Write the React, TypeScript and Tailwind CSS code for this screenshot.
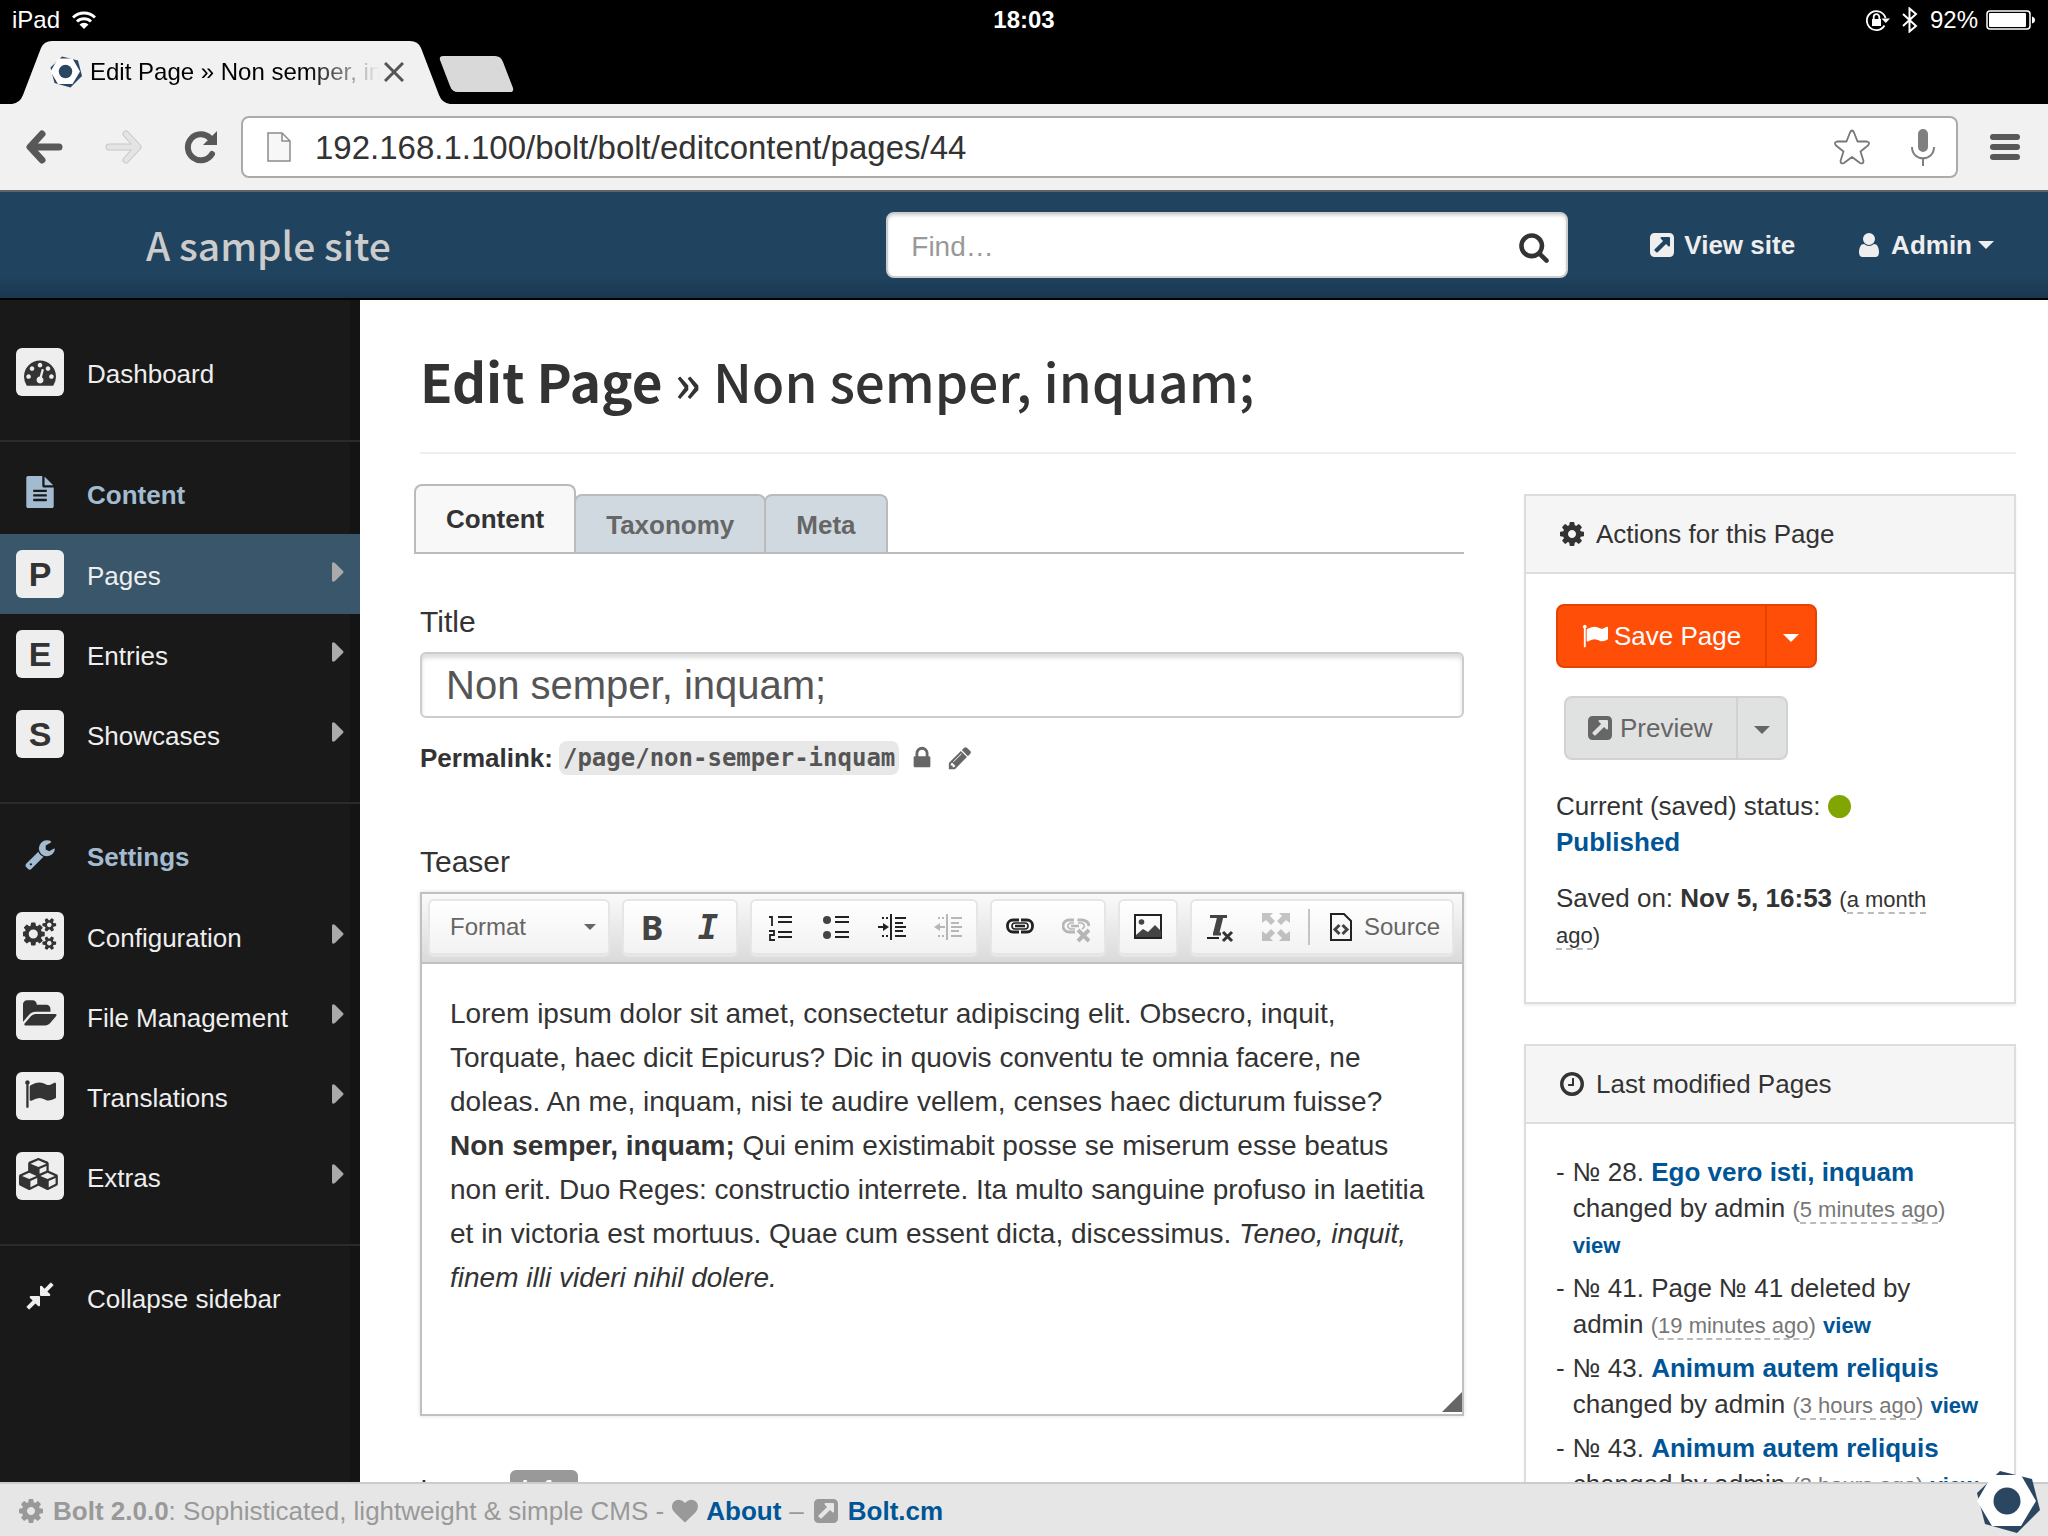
import type { ReactNode } from "react";

const PATHS = {
  flag: "M320 256q0 72-64 110v1266q0 13-9.5 22.500t-22.500 9.500h-64q-13 0-22.500-9.500t-9.500-22.500v-1266q-64-38-64-110 0-53 37.500-90.500t90.500-37.500 90.500 37.500 37.500 90.500zm1472 64v763q0 25-12.500 38.500t-39.500 27.500q-215 116-369 116-61 0-123.500-22t-108.500-48-115.500-48-142.500-22q-192 0-464 146-17 9-33 9-26 0-45-19t-19-45v-742q0-32 31-55 21-14 79-43 236-120 421-120 107 0 200 29t219 88q38 19 88 19 54 0 117.500-21t110-47 88-47 54.500-21q26 0 45 19t19 45z",
  cog: "M1152 896q0-106-75-181t-181-75-181 75-75 181 75 181 181 75 181-75 75-181zm512-109v222q0 12-8 23t-20 13l-185 28q-19 54-39 91 35 50 107 138 10 12 10 25t-9 23q-27 37-99 108t-94 71q-12 0-26-9l-138-108q-44 23-91 38-16 136-29 186-7 28-36 28h-222q-14 0-24.500-8.500t-11.500-21.500l-28-184q-49-16-90-37l-141 107q-10 9-25 9-14 0-25-11-126-114-165-168-7-10-7-23 0-12 8-23 15-21 51-66.500t54-70.500q-27-50-41-99l-183-27q-13-2-21-12.500t-8-23.500v-222q0-12 8-23t19-13l186-28q14-46 39-92-40-57-107-138-10-12-10-24 0-10 9-23 26-36 98.500-107.500t94.500-71.500q13 0 26 10l138 107q44-23 91-38 16-136 29-186 7-28 36-28h222q14 0 24.500 8.500t11.500 21.500l28 184q49 16 90 37l142-107q9-9 24-9 13 0 25 10 129 119 165 170 7 8 7 22 0 12-8 23-15 21-51 66.500t-54 70.500q26 50 41 98l183 28q13 2 21 12.500t8 23.500z",
  search: "M1216 832q0-185-131.500-316.500t-316.500-131.500-316.500 131.500-131.500 316.500 131.500 316.500 316.500 131.500 316.500-131.500 131.500-316.500zm512 832q0 52-38 90t-90 38q-54 0-90-38l-343-342q-179 124-399 124-143 0-273.500-55.500t-225-150-150-225-55.500-273.500 55.500-273.500 150-225 225-150 273.500-55.500 273.500 55.500 225 150 150 225 55.500 273.500q0 220-124 399l343 343q37 37 37 90z",
  external: "M1408 928v-480q0-26-19-45t-45-19h-480q-42 0-59 39-17 41 14 70l144 144-534 534q-19 19-19 45t19 45l102 102q19 19 45 19t45-19l534-534 144 144q18 19 45 19 12 0 25-5 39-17 39-59zm256-512v960q0 119-84.500 203.500t-203.500 84.500h-960q-119 0-203.500-84.500t-84.500-203.500v-960q0-119 84.500-203.500t203.500-84.500h960q119 0 203.500 84.500t84.500 203.500z",
  user: "M1536 1399q0 109-62.500 187t-150.500 78h-854q-88 0-150.500-78t-62.500-187q0-85 8.500-160.500t31.500-152 58.500-131 94-89 134.500-34.500q131 128 313 128t313-128q76 0 134.500 34.500t94 89 58.500 131 31.500 152 8.500 160.500zm-256-887q0 159-112.500 271.500t-271.500 112.500-271.500-112.500-112.500-271.500 112.500-271.500 271.500-112.500 271.500 112.500 112.500 271.500z",
  dashboard: "M384 1152q0-53-37.500-90.500t-90.500-37.500-90.500 37.500-37.500 90.500 37.500 90.500 90.500 37.500 90.500-37.500 37.500-90.500zm192-448q0-53-37.500-90.500t-90.500-37.500-90.500 37.500-37.500 90.500 37.500 90.500 90.500 37.500 90.500-37.500 37.500-90.500zm428 481l101-382q6-26-7.500-48.500t-38.500-29.500-48 6.500-30 39.500l-101 382q-60 5-107 43.500t-63 98.500q-20 77 20 146t117 89 146-20 89-117q16-60-6-117t-72-91zm660-33q0-53-37.500-90.500t-90.500-37.500-90.500 37.500-37.500 90.500 37.500 90.500 90.500 37.500 90.500-37.500 37.500-90.500zm-640-640q0-53-37.500-90.500t-90.500-37.500-90.500 37.500-37.500 90.500 37.500 90.500 90.500 37.500 90.500-37.500 37.500-90.500zm448 192q0-53-37.500-90.500t-90.500-37.500-90.500 37.500-37.500 90.500 37.500 90.500 90.500 37.500 90.500-37.500 37.500-90.500zm320 448q0 261-141 483-19 29-54 29h-1402q-35 0-54-29-141-221-141-483 0-182 71-348t191-286 286-191 348-71 348 71 286 191 191 286 71 348z",
  file: "M1596 476q14 14 28 36h-472v-472q22 14 36 28zm-476 164h544v1056q0 40-28 68t-68 28h-1344q-40 0-68-28t-28-68v-1600q0-40 28-68t68-28h800v544q0 40 28 68t68 28zm160 736v-64q0-14-9-23t-23-9h-704q-14 0-23 9t-9 23v64q0 14 9 23t23 9h704q14 0 23-9t9-23zm0-256v-64q0-14-9-23t-23-9h-704q-14 0-23 9t-9 23v64q0 14 9 23t23 9h704q14 0 23-9t9-23zm0-256v-64q0-14-9-23t-23-9h-704q-14 0-23 9t-9 23v64q0 14 9 23t23 9h704q14 0 23-9t9-23z",
  wrench: "M448 1472q0-26-19-45t-45-19-45 19-19 45 19 45 45 19 45-19 19-45zm644-420l-682 682q-37 37-90 37-52 0-91-37l-106-108q-38-36-38-90 0-53 38-91l681-681q39 98 114.500 173.500t173.500 114.500zm634-435q0 39-23 106-47 134-164.500 217.500t-258.500 83.500q-185 0-316.500-131.500t-131.500-316.500 131.500-316.500 316.500-131.500q58 0 121.500 16.500t107.500 46.500q16 11 16 28t-16 28l-293 169v224l193 107q5-3 79-48.500t135.500-81 70.500-35.500q15 0 23.500 10t8.500 25z",
  cogs: "M832 896q0-106-75-181t-181-75-181 75-75 181 75 181 181 75 181-75 75-181zm768 512q0-52-38-90t-90-38-90 38-38 90q0 53 37.500 90.500t90.500 37.500 90.500-37.500 37.500-90.500zm0-1024q0-52-38-90t-90-38-90 38-38 90q0 53 37.500 90.500t90.500 37.500 90.500-37.500 37.500-90.500zm-384 421v185q0 10-7 19.500t-16 10.500l-155 24q-11 35-32 76 34 48 90 115 7 11 7 20 0 12-7 19-23 30-82.500 89.500t-78.500 59.500q-11 0-21-7l-115-90q-37 19-77 31-11 108-23 155-7 24-30 24h-186q-11 0-20-7.500t-10-17.500l-23-153q-34-10-75-31l-118 89q-7 7-20 7-11 0-21-8-144-133-144-160 0-9 7-19 10-14 41-53t47-61q-23-44-35-82l-152-24q-10-1-17-9.500t-7-19.500v-185q0-10 7-19.500t16-10.500l155-24q11-35 32-76-34-48-90-115-7-11-7-20 0-12 7-20 22-30 82-89t79-59q11 0 21 7l115 90q34-18 77-32 11-108 23-154 7-24 30-24h186q11 0 20 7.500t10 17.500l23 153q34 10 75 31l118-89q8-7 20-7 11 0 21 8 144 133 144 160 0 8-7 19-12 16-42 54t-45 60q23 48 34 82l152 23q10 2 17 10.500t7 19.500zm640 533v140q0 16-149 31-12 27-30 52 51 113 51 138 0 4-4 7-122 71-124 71-8 0-46-47t-52-68q-20 2-30 2t-30-2q-14 21-52 68t-46 47q-2 0-124-71-4-3-4-7 0-25 51-138-18-25-30-52-149-15-149-31v-140q0-16 149-31 13-29 30-52-51-113-51-138 0-4 4-7 4-2 35-20t59-34 30-16q8 0 46 46.500t52 67.500q20-2 30-2t30 2q51-71 92-112l6-2q4 0 124 70 4 3 4 7 0 25-51 138 17 23 30 52 149 15 149 31zm0-1024v140q0 16-149 31-12 27-30 52 51 113 51 138 0 4-4 7-122 71-124 71-8 0-46-47t-52-68q-20 2-30 2t-30-2q-14 21-52 68t-46 47q-2 0-124-71-4-3-4-7 0-25 51-138-18-25-30-52-149-15-149-31v-140q0-16 149-31 13-29 30-52-51-113-51-138 0-4 4-7 4-2 35-20t59-34 30-16q8 0 46 46.500t52 67.500q20-2 30-2t30 2q51-71 92-112l6-2q4 0 124 70 4 3 4 7 0 25-51 138 17 23 30 52 149 15 149 31z",
  folder: "M1879 952q0 31-31 66l-336 396q-43 51-120.500 86.500t-143.500 35.500h-1088q-34 0-60.500-13t-26.500-43q0-31 31-66l336-396q43-51 120.500-86.500t143.500-35.500h1088q34 0 60.500 13t26.500 43zm-343-344v160h-832q-94 0-197 47.500t-164 119.500l-337 396-5 6q0-4-.5-12.500t-.5-12.500v-960q0-92 66-158t158-66h320q92 0 158 66t66 158v32h544q92 0 158 66t66 158z",
  cubes: "M640 1632l384-192v-314l-384 164v342zm-64-454l404-173-404-173-404 173zm1088 454l384-192v-314l-384 164v342zm-64-454l404-173-404-173-404 173zm-448-293l384-165v-266l-384 164v267zm-64-379l441-189-441-189-441 189zm1088 518v416q0 36-19 67t-52 47l-448 224q-25 14-57 14t-57-14l-448-224q-4-2-7-4-2 2-7 4l-448 224q-25 14-57 14t-57-14l-448-224q-33-16-52-47t-19-67v-416q0-38 21.500-70t56.500-48l434-186v-400q0-38 21.500-70t56.500-48l448-192q23-10 50-10t50 10l448 192q35 16 56.500 48t21.500 70v400l434 186q36 16 57 48t21 70z",
  compress: "M896 960v448q0 26-19 45t-45 19-45-19l-144-144-332 332q-10 10-23 10t-23-10l-114-114q-10-10-10-23t10-23l332-332-144-144q-19-19-19-45t19-45 45-19h448q26 0 45 19t19 45zm755-672q0 13-10 23l-332 332 144 144q19 19 19 45t-19 45-45 19h-448q-26 0-45-19t-19-45v-448q0-26 19-45t45-19 45 19l144 144 332-332q10-10 23-10t23 10l114 114q10 10 10 23z",
  lock: "M640 768h512v-192q0-106-75-181t-181-75-181 75-75 181v192zm832 96v576q0 40-28 68t-68 28h-960q-40 0-68-28t-28-68v-576q0-40 28-68t68-28h32v-192q0-184 132-316t316-132 316 132 132 316v192h32q40 0 68 28t28 68z",
  pencil: "M491 1536l91-91-235-235-91 91v107h128v128h107zm523-928q0-22-22-22-10 0-17 7l-542 542q-7 7-7 17 0 22 22 22 10 0 17-7l542-542q7-7 7-17zm-54-192l416 416-832 832h-416v-416zm683 96q0 53-37 90l-166 166-416-416 166-165q36-38 90-38 53 0 91 38l235 234q37 39 37 91z",
  clock: "M1024 544v448q0 14-9 23t-23 9h-320q-14 0-23-9t-9-23v-64q0-14 9-23t23-9h224v-352q0-14 9-23t23-9h64q14 0 23 9t9 23zm416 352q0-148-73-273t-198-198-273-73-273 73-198 198-73 273 73 273 198 198 273 73 273-73 198-198 73-273zm224 0q0 209-103 385.500t-279.500 279.500-385.500 103-385.500-103-279.500-279.500-103-385.500 103-385.500 279.500-279.500 385.500-103 385.500 103 279.500 279.500 103 385.500z",
  heart: "M896 1664q-26 0-44-18l-624-602q-10-8-27.500-26t-55.500-65.500-68-97.500-53.500-121-23.500-138q0-220 127-344t351-124q62 0 126.500 21.500t120 58 95.500 68.500 76 68q36-36 76-68t95.500-68.500 120-58 126.500-21.500q224 0 351 124t127 344q0 221-229 450l-623 600q-18 18-44 18z",
};

type IconName = keyof typeof PATHS;

const WIDE: Partial<Record<IconName, number>> = { cogs: 1920, folder: 1920, cubes: 2304 };

function Icon({ name, className = "h-7" }: { name: IconName; className?: string }) {
  return (
    <svg viewBox={`0 0 ${WIDE[name] ?? 1792} 1792`} className={`inline-block w-auto shrink-0 fill-current ${className}`} aria-hidden="true">
      <path d={PATHS[name]} />
    </svg>
  );
}

function Caret({ className = "h-2 w-4" }: { className?: string }) {
  return (
    <svg viewBox="0 0 16 8" className={`shrink-0 fill-current ${className}`} aria-hidden="true">
      <path d="M0 0h16l-8 8z" />
    </svg>
  );
}

function BoltLogo({ className }: { className: string }) {
  return (
    <svg viewBox="0 0 64 64" className={className} aria-hidden="true">
      <path fill="#2b4660" d="M24 1 56 9 64 40 41 63 9 54 1 23z" />
      <path fill="#fff" d="M16 5h29l15 26-15 25H16L1 31z" />
      <circle cx="31" cy="31" r="13.500" fill="#2b4660" />
    </svg>
  );
}

function StatusBar() {
  return (
    <div className="grid h-10 shrink-0 grid-cols-3 items-center px-3 text-2xl text-white">
      <div className="flex items-center gap-3">
        <span>iPad</span>
        <svg viewBox="0 0 24 18" className="h-[18px] w-6" fill="none" stroke="#fff" strokeWidth="3" aria-hidden="true">
          <path d="M1 6.500a15.500 15.500 0 0 1 22 0M5 10.500a10 10 0 0 1 14 0" />
          <path fill="#fff" stroke="none" d="M12 18l-4.500-4.500a6.400 6.400 0 0 1 9 0z" />
        </svg>
      </div>
      <span className="text-center font-bold">18:03</span>
      <div className="flex items-center justify-end gap-2">
        <svg viewBox="0 0 24 26" className="h-[26px] w-6" fill="none" stroke="#fff" strokeWidth="1.800" aria-hidden="true">
          <path d="M18.500 18.500A9.500 9.500 0 1 1 19.500 11" />
          <path fill="#fff" stroke="none" d="M15.500 11.500H24l-4.200 4.500zM6 12h9v7H6z" />
          <path d="M7.700 12v-2a2.800 2.800 0 0 1 5.600 0v2" />
        </svg>
        <svg viewBox="0 0 16 26" className="mx-1 h-[26px] w-4" fill="none" stroke="#fff" strokeWidth="2" aria-hidden="true">
          <path d="M1 7l13 12-6.500 5.500v-23L14 7 1 19" />
        </svg>
        <span>92%</span>
        <svg viewBox="0 0 50 20" className="h-5 w-[50px]" aria-hidden="true">
          <rect x="1" y="1" width="43" height="18" rx="3" fill="none" stroke="#fff" strokeWidth="1.500" />
          <rect x="3" y="3" width="37" height="14" rx="1" fill="#fff" />
          <path fill="#fff" d="M46 6.500q3 1 3 3.500t-3 3.500z" />
        </svg>
      </div>
    </div>
  );
}

function BrowserTabs() {
  return (
    <div className="flex h-16 shrink-0 items-end pl-3">
      <div className="relative flex h-16 w-[438px] items-center pl-[38px]">
        <svg viewBox="0 0 438 64" preserveAspectRatio="none" className="absolute inset-0 h-full w-full" aria-hidden="true">
          <path fill="#f1f1f1" d="M0 64q8-1 11-9L29 8q3-7 11-7h358q8 0 11 7l18 47q3 8 11 9z" />
        </svg>
        <BoltLogo className="relative mr-2 h-8 w-8" />
        <span className="relative w-[290px] overflow-hidden whitespace-nowrap bg-linear-to-r from-black from-75% to-transparent bg-clip-text text-2xl text-transparent">
          Edit Page » Non semper, inquam;
        </span>
        <button aria-label="Close tab" className="relative ml-1 flex h-6 w-5 items-center justify-center">
          <svg viewBox="0 0 20 20" className="h-5 w-5" stroke="#555" strokeWidth="3" aria-hidden="true">
            <path d="M1 1l18 18M19 1L1 19" />
          </svg>
        </button>
      </div>
      <button aria-label="New tab" className="mb-3 -ml-3">
        <svg viewBox="0 0 76 36" className="h-9 w-[76px]" aria-hidden="true">
          <path fill="#d9d9d9" d="M5 0h52q6 0 8 6l10 26q1 4-3 4H20q-6 0-8-6L2 4q-1-4 3-4z" />
        </svg>
      </button>
    </div>
  );
}

function BrowserToolbar() {
  return (
    <div className="flex h-22 shrink-0 items-center border-b-2 border-[#5f6468] bg-[#f1f1f1] pr-7 pl-6">
      <button aria-label="Back">
        <svg viewBox="0 0 40 36" className="h-9 w-10" fill="none" stroke="#585858" strokeWidth="7" strokeLinecap="round" strokeLinejoin="round" aria-hidden="true">
          <path d="M18 5L6 18l12 13M7 18h28" />
        </svg>
      </button>
      <button aria-label="Forward" className="ml-10">
        <svg viewBox="0 0 40 36" className="h-9 w-10" fill="none" strokeLinecap="round" strokeLinejoin="round" aria-hidden="true">
          <path stroke="#c8c8c8" strokeWidth="7" d="M22 5l12 13-12 13M33 18H5" />
          <path stroke="#e4e4e4" strokeWidth="5" d="M22 5l12 13-12 13M33 18H5" />
        </svg>
      </button>
      <button aria-label="Reload" className="ml-10">
        <svg viewBox="0 0 34 34" className="h-[34px] w-[34px]" aria-hidden="true">
          <path fill="none" stroke="#585858" strokeWidth="6" strokeLinecap="round" d="M28 24A13 13 0 1 1 26 8" />
          <path fill="#585858" d="M33 1v14H19z" />
        </svg>
      </button>
      <div className="ml-[23px] flex h-[62px] min-w-0 flex-1 items-center rounded-lg border-2 border-[#ababab] bg-white pr-5 pl-6">
        <svg viewBox="0 0 24 30" className="h-[30px] w-6 shrink-0" fill="#f7f7f7" stroke="#8c8c8c" strokeWidth="1.500" aria-hidden="true">
          <path d="M1 1h14l8 8v20H1zM15 1v8h8" />
        </svg>
        <input
          aria-label="Address"
          defaultValue="192.168.1.100/bolt/bolt/editcontent/pages/44"
          className="ml-6 min-w-0 flex-1 pt-0.5 text-[33px] leading-10 text-[#333] outline-none"
        />
        <button aria-label="Bookmark">
          <svg viewBox="0 0 36 36" className="h-9 w-9" fill="none" stroke="#777" strokeWidth="1.800" strokeLinejoin="round" aria-hidden="true">
            <path d="M16 3.500q2-4 4 0l3.500 9H33q3.500 1 1 4l-7.500 6 3 9.500q0 3.500-3.500 2L18 28l-8 6q-3.500 1.500-3.500-2l3-9.500-7.500-6q-2.500-3 1-4h9.500z" />
          </svg>
        </button>
        <button aria-label="Voice search" className="ml-10">
          <svg viewBox="0 0 26 38" className="h-[38px] w-[26px]" fill="none" stroke="#808080" strokeWidth="2" aria-hidden="true">
            <rect x="9" y="2" width="8" height="21" rx="4" fill="#808080" />
            <path d="M2 19c0 15 22 15 22 0M13 30v8" />
          </svg>
        </button>
      </div>
      <button aria-label="Menu" className="ml-8 flex flex-col gap-1">
        <span className="h-[6px] w-[30px] rounded-sm bg-[#585858]" />
        <span className="h-[6px] w-[30px] rounded-sm bg-[#585858]" />
        <span className="h-[6px] w-[30px] rounded-sm bg-[#585858]" />
      </button>
    </div>
  );
}

function SiteHeader() {
  return (
    <header className="flex h-27 shrink-0 items-center border-b-2 border-black bg-linear-to-b from-[#20435f] from-80% to-[#1a364e] pr-[54px] pl-[146px] text-[26px] font-bold text-[#eee]">
      <a href="#site" className="pb-0.5 font-['Noto_Sans_CJK_SC',sans-serif] text-[39px] leading-10 font-medium text-[#ccc]">
        A sample site
      </a>
      <div className="ml-auto flex h-[66px] w-[682px] items-center rounded-lg border-2 border-[#ccc] bg-white pr-4 pl-[23px] shadow-[inset_0_2px_3px_#ddd]">
        <input
          aria-label="Find"
          placeholder="Find…"
          className="min-w-0 flex-1 pt-1 text-[28px] font-normal text-[#333] outline-none placeholder:text-[#999]"
        />
        <button aria-label="Search" className="text-[#333]">
          <Icon name="search" className="h-8" />
        </button>
      </div>
      <a href="#view" className="ml-20 flex items-center gap-2">
        <Icon name="external" />
        View site
      </a>
      <button className="ml-15 flex items-center gap-2">
        <Icon name="user" />
        <span className="flex items-center gap-1.5">
          Admin
          <Caret />
        </span>
      </button>
    </header>
  );
}

function MenuIcon({ children }: { children: ReactNode }) {
  return (
    <span className="flex size-12 shrink-0 items-center justify-center rounded-md bg-[#eee] text-[34px] leading-none font-bold text-[#333]">
      {children}
    </span>
  );
}

function MenuLink({ icon, label, arrow = true, active = false }: { icon: ReactNode; label: string; arrow?: boolean; active?: boolean }) {
  return (
    <a href="#menu" className={`flex h-20 items-center pr-4 pl-4 ${active ? "bg-[#3a566a]" : ""}`}>
      {icon}
      <span className="ml-[23px] pt-1">{label}</span>
      {arrow && (
        <svg viewBox="0 0 12 20" className="mb-1 ml-auto h-5 w-3 fill-[#aaa]" aria-hidden="true">
          <path d="M0 2q0-3 3-1l8 8q1 1 0 2l-8 8q-3 2-3-1z" />
        </svg>
      )}
    </a>
  );
}

function MenuHeading({ icon, label }: { icon: IconName; label: string }) {
  return (
    <div className="flex h-20 items-center pl-4 font-bold text-[#a3bbd0]">
      <span className="flex w-12 justify-center pb-1">
        <Icon name={icon} className="h-8" />
      </span>
      <span className="ml-[23px] pt-0.5">{label}</span>
    </div>
  );
}

function Sidebar() {
  return (
    <aside className="w-[360px] shrink-0 bg-[#191919] text-[26px] text-[#eee] shadow-[inset_-10px_0_0_#141414]">
      <nav>
        <div className="border-b-2 border-[#2b2b2b] pt-8 pb-7">
          <MenuLink arrow={false} label="Dashboard" icon={<MenuIcon><Icon name="dashboard" className="h-8" /></MenuIcon>} />
        </div>
        <div className="border-b-2 border-[#2b2b2b] pt-3 pb-7">
          <MenuHeading icon="file" label="Content" />
          <MenuLink active label="Pages" icon={<MenuIcon>P</MenuIcon>} />
          <MenuLink label="Entries" icon={<MenuIcon>E</MenuIcon>} />
          <MenuLink label="Showcases" icon={<MenuIcon>S</MenuIcon>} />
        </div>
        <div className="border-b-2 border-[#2b2b2b] pt-3 pb-7">
          <MenuHeading icon="wrench" label="Settings" />
          <MenuLink label="Configuration" icon={<MenuIcon><Icon name="cogs" className="mb-1 h-8" /></MenuIcon>} />
          <MenuLink label="File Management" icon={<MenuIcon><Icon name="folder" className="mb-1 h-8" /></MenuIcon>} />
          <MenuLink label="Translations" icon={<MenuIcon><Icon name="flag" className="mb-1 h-8" /></MenuIcon>} />
          <MenuLink label="Extras" icon={<MenuIcon><Icon name="cubes" className="mb-1 h-8" /></MenuIcon>} />
        </div>
        <button className="mt-3 flex h-20 w-full items-center pl-4">
          <span className="flex w-12 justify-center pb-1">
            <Icon name="compress" className="h-8" />
          </span>
          <span className="ml-[23px] pt-0.5">Collapse sidebar</span>
        </button>
      </nav>
    </aside>
  );
}

function ToolGroup({ children }: { children: ReactNode }) {
  return (
    <div className="flex h-[58px] shrink-0 items-center rounded-md border-2 border-b-4 border-[#e6e6e6] bg-linear-to-b from-white to-[#f2f2f2]">
      {children}
    </div>
  );
}

function ToolButton({ label, faded = false, children }: { label: string; faded?: boolean; children: ReactNode }) {
  return (
    <button aria-label={label} className={`flex h-12 w-14 items-center justify-center ${faded ? "opacity-30" : ""}`}>
      <svg viewBox="0 0 28 32" className="h-8 w-7" fill="none" stroke="#222" strokeWidth="2" aria-hidden="true">
        {children}
      </svg>
    </button>
  );
}

function EditorToolbar() {
  return (
    <div className="flex h-[70px] items-center gap-3 overflow-hidden border-b-2 border-[#c0c0c0] bg-linear-to-b from-[#fafafa] to-[#dadada] px-1.5 text-2xl text-[#666]">
      <ToolGroup>
        <button className="flex h-12 w-[178px] items-center justify-between pr-3 pl-5">
          Format
          <Caret className="h-1.5 w-3" />
        </button>
      </ToolGroup>
      <ToolGroup>
        <button aria-label="Bold" className="h-12 w-14 font-['Noto_Sans',sans-serif] text-[34px] leading-10 font-bold text-[#444]">B</button>
        <button aria-label="Italic" className="h-12 w-14 font-['DejaVu_Sans_Mono',monospace] text-[34px] leading-10 font-bold text-[#444] italic">I</button>
      </ToolGroup>
      <ToolGroup>
        <ToolButton label="Numbered list">
          <path d="M12 6h14M12 11h14M12 21h14M12 26h14" />
          <path strokeWidth="1.800" d="M3 6h3v9M3 20h5v4H4v5h5" />
        </ToolButton>
        <ToolButton label="Bulleted list">
          <circle cx="5" cy="9" r="4" fill="#444" stroke="none" />
          <circle cx="5" cy="24" r="4" fill="#444" stroke="none" />
          <path d="M13 6h14M13 11h14M13 21h14M13 26h14" />
        </ToolButton>
        <ToolButton label="Increase indent">
          <path d="M13 3v26M17 7h11M17 12h8M17 16h11M17 20h8M17 25h11M0 16h8" />
          <path fill="#222" stroke="none" d="M5 12l6 4-6 4z" />
          <path strokeDasharray="2 2" d="M4 7h7M4 25h7" />
        </ToolButton>
        <ToolButton label="Decrease indent" faded>
          <path d="M13 3v26M17 7h11M17 12h8M17 16h11M17 20h8M17 25h11M3 16h8" />
          <path fill="#222" stroke="none" d="M6 12l-6 4 6 4z" />
          <path strokeDasharray="2 2" d="M4 7h7M4 25h7" />
        </ToolButton>
      </ToolGroup>
      <ToolGroup>
        <ToolButton label="Link">
          <rect x="1.500" y="9" width="25" height="12" rx="5.500" strokeWidth="2.800" />
          <rect x="6" y="12" width="16" height="6" rx="3" strokeWidth="1.600" />
          <path stroke="#fafafa" d="M14 7v4M14 19v4" />
          <path strokeWidth="2.500" d="M9 15h10" />
        </ToolButton>
        <ToolButton label="Unlink" faded>
          <path strokeWidth="2.800" d="M13 21H7a6 6 0 0 1 0-12h5M15.500 9h5q6 1 6.500 6" />
          <path strokeWidth="1.600" d="M13 18H8.500q-6-3 0-6H12M16 12h4q5 3 0 6" />
          <path strokeWidth="2.500" d="M9 15h8" />
          <path strokeWidth="4" d="M16 19l11 11M27 19L16 30" />
        </ToolButton>
      </ToolGroup>
      <ToolGroup>
        <ToolButton label="Image">
          <rect x="1" y="4" width="26" height="23" />
          <circle cx="7.500" cy="11" r="2.800" fill="#444" stroke="none" />
          <path fill="#444" stroke="none" d="M2 26v-2l7-6 5 3 7-7 6 6v6z" />
        </ToolButton>
      </ToolGroup>
      <ToolGroup>
        <ToolButton label="Remove format">
          <path stroke="#444" strokeWidth="3" d="M4 5.500h17M7 23h8" />
          <path stroke="#444" strokeWidth="6" d="M14.500 5L10 23" />
          <path strokeWidth="2" d="M1 27h12" />
          <path stroke="#333" strokeWidth="3" d="M17 21l9 9M26 21l-9 9" />
        </ToolButton>
        <ToolButton label="Maximize" faded>
          <path fill="#444" stroke="none" d="M0 2h11L8 5l5 5-4 4-5-5-4 3zM28 2H17l3 3-5 5 4 4 5-5 4 3zM0 30h11l-3-3 5-5-4-4-5 5-4-3zM28 30H17l3-3-5-5 4-4 5 5 4-3z" />
        </ToolButton>
        <span className="mx-1 h-9 w-0.5 bg-[#c4c4c4]" />
        <button className="flex h-12 items-center gap-3 pr-3 pl-4">
          <svg viewBox="0 0 22 28" className="h-7 w-[22px]" fill="none" stroke="#222" strokeWidth="2" aria-hidden="true">
            <path d="M1 1h13l7 7v19H1z" />
            <path stroke="#444" strokeWidth="3" d="M9.500 12L5 16.500l4.500 4.500M12.500 12l4.500 4.500-4.500 4.500" />
          </svg>
          Source
        </button>
      </ToolGroup>
    </div>
  );
}

function EditorColumn() {
  return (
    <div className="min-w-0 flex-1 text-[26px]">
      <div role="tablist" className="-ml-1.5 flex items-end border-b-2 border-[#bbb] font-bold text-[#666]">
        <button role="tab" aria-selected="true" className="h-[68px] rounded-t-lg border-2 border-b-0 border-[#bbb] bg-[#f8f8f8] px-[30px] text-[#333]">
          Content
        </button>
        <button role="tab" aria-selected="false" className="-ml-0.5 h-[58px] rounded-t-lg border-2 border-b-0 border-[#bbb] bg-[#d1d9e0] px-[30px] pt-0.5">
          Taxonomy
        </button>
        <button role="tab" aria-selected="false" className="-ml-0.5 h-[58px] rounded-t-lg border-2 border-b-0 border-[#bbb] bg-[#d1d9e0] px-[30px] pt-0.5">
          Meta
        </button>
      </div>

      <label htmlFor="title" className="mt-12 block text-[30px] leading-10">Title</label>
      <input
        id="title"
        defaultValue="Non semper, inquam;"
        className="mt-2.5 h-[66px] w-full rounded-md border-2 border-[#ccc] bg-white px-6 text-[40px] text-[#555] shadow-[inset_0_4px_4px_#ddd] outline-none"
      />
      <div className="mt-5 flex h-10 items-center">
        <strong>Permalink:</strong>
        <code className="ml-1.5 rounded-lg bg-[#e8e8e8] px-1 font-['DejaVu_Sans_Mono',monospace] text-2xl leading-[34px] font-bold text-[#555]">
          /page/non-semper-inquam
        </code>
        <button aria-label="Lock permalink" className="ml-2.5 flex text-[#666]">
          <Icon name="lock" className="h-[26px]" />
        </button>
        <button aria-label="Edit permalink" className="ml-3 flex text-[#666]">
          <Icon name="pencil" className="h-[26px]" />
        </button>
      </div>

      <span id="teaser-label" className="mt-16 block text-[30px] leading-10">Teaser</span>
      <div className="relative mt-2.5 border-2 border-[#c0c0c0] shadow-[0_0_4px_#ddd]">
        <EditorToolbar />
        <div role="textbox" aria-multiline="true" aria-labelledby="teaser-label" className="h-[450px] px-7 pt-7 text-[28px] leading-[44px]">
          Lorem ipsum dolor sit amet, consectetur adipiscing elit. Obsecro, inquit, Torquate, haec dicit Epicurus? Dic in
          quovis conventu te omnia facere, ne doleas. An me, inquam, nisi te audire vellem, censes haec dicturum fuisse?{" "}
          <b>Non semper, inquam;</b> Qui enim existimabit posse se miserum esse beatus non erit. Duo Reges: constructio
          interrete. Ita multo sanguine profuso in laetitia et in victoria est mortuus. Quae cum essent dicta,
          discessimus. <i>Teneo, inquit, finem illi videri nihil dolere.</i>
        </div>
        <svg viewBox="0 0 20 20" className="absolute right-0 bottom-0.5 h-5 w-5 fill-[#666]" aria-hidden="true">
          <path d="M20 0v20H0z" />
        </svg>
      </div>

      <div className="mt-[54px] flex items-start">
        <span className="text-[28px] leading-10">Image</span>
        <button className="ml-3 rounded-md bg-[#999] px-3 text-2xl leading-10 font-bold text-white">info</button>
      </div>
    </div>
  );
}

function Panel({ icon, title, children }: { icon: IconName; title: string; children: ReactNode }) {
  return (
    <section className="border-2 border-[#ddd] bg-white shadow-[0_2px_2px_#f0f0f0]">
      <h2 className="flex h-[78px] items-center gap-2.5 border-b-2 border-[#ddd] bg-[#f5f5f5] px-8">
        <Icon name={icon} />
        {title}
      </h2>
      <div className="px-[30px]">{children}</div>
    </section>
  );
}

function Ago({ children }: { children: ReactNode }) {
  return <span className="border-b-2 border-dashed border-[#bbb]">{children}</span>;
}

const LINK = "font-bold text-[#005596]";

function Entry({ children, ago }: { children: ReactNode; ago: string }) {
  return (
    <li className="flex gap-2">
      <span>-</span>
      <div>
        {children}{" "}
        <span className="text-[22px] leading-7 text-[#777]">
          (<Ago>{ago}</Ago>)
        </span>{" "}
        <a href="#view" className={`${LINK} text-[22px] leading-7`}>view</a>
      </div>
    </li>
  );
}

function SideColumn() {
  return (
    <div className="mt-2.5 flex w-[492px] shrink-0 flex-col gap-10 text-[26px] leading-9">
      <Panel icon="cog" title="Actions for this Page">
        <div className="flex flex-col items-start pt-[30px] pb-[50px]">
          <div className="flex h-16 divide-x-2 divide-[#e64200] rounded-lg border-2 border-[#e64200] bg-[#ff4e08] text-white">
            <button className="flex items-center gap-1.5 pr-6 pl-6">
              <Icon name="flag" className="h-[26px]" />
              Save Page
            </button>
            <button aria-label="More save options" className="w-12 pt-1">
              <Caret className="mx-auto h-2 w-4" />
            </button>
          </div>
          <div className="mt-7 ml-2 flex h-16 divide-x-2 divide-[#d2d2d2] rounded-lg border-2 border-[#d2d2d2] bg-[#e0e1e1] text-[#666]">
            <button className="flex items-center gap-1.5 pr-6 pl-5">
              <Icon name="external" />
              Preview
            </button>
            <button aria-label="More preview options" className="w-12 pt-1">
              <Caret className="mx-auto h-2 w-4" />
            </button>
          </div>
          <p className="mt-7">
            Current (saved) status:{" "}
            <span className="inline-block size-[23px] rounded-full bg-[#81a600] align-[-3px]" />
            <br />
            <a href="#status" className={LINK}>Published</a>
          </p>
          <p className="mt-5 pr-6">
            Saved on: <strong>Nov 5, 16:53</strong>{" "}
            <span className="text-[22px] leading-7">
              (<Ago>a month ago</Ago>)
            </span>
          </p>
        </div>
      </Panel>
      <Panel icon="clock" title="Last modified Pages">
        <ul className="flex flex-col gap-2 pt-[30px] pb-8">
          <Entry ago="5 minutes ago">
            № 28. <a href="#28" className={LINK}>Ego vero isti, inquam</a> changed by admin
          </Entry>
          <Entry ago="19 minutes ago">№ 41. Page № 41 deleted by admin</Entry>
          <Entry ago="3 hours ago">
            № 43. <a href="#43" className={LINK}>Animum autem reliquis</a> changed by admin
          </Entry>
          <Entry ago="3 hours ago">
            № 43. <a href="#43" className={LINK}>Animum autem reliquis</a> changed by admin
          </Entry>
        </ul>
      </Panel>
    </div>
  );
}

function SiteFooter() {
  return (
    <footer className="relative flex h-[54px] shrink-0 items-center border-t-2 border-[#ccc] bg-[#e6e6e6] px-[17px] text-[26px] text-[#999]">
      <p className="flex items-center gap-2 whitespace-nowrap pt-0.5">
        <Icon name="cog" />
        <span><strong>Bolt 2.0.0</strong>: Sophisticated, lightweight &amp; simple CMS -</span>
        <Icon name="heart" className="h-[26px]" />
        <a href="#about" className={LINK}>About</a>
        <span>–</span>
        <Icon name="external" />
        <a href="#bolt" className={LINK}>Bolt.cm</a>
      </p>
      <BoltLogo className="absolute right-2 bottom-0.5 size-16" />
    </footer>
  );
}

export default function App() {
  return (
    <div className="flex h-screen flex-col overflow-hidden bg-black font-['Liberation_Sans',Arial,sans-serif] text-[#333]">
      <StatusBar />
      <BrowserTabs />
      <BrowserToolbar />
      <SiteHeader />
      <div className="flex min-h-0 flex-1">
        <Sidebar />
        <main className="min-w-0 flex-1 overflow-hidden bg-white pr-8 pl-[60px]">
          <h1 className="border-b-2 border-[#eee] pt-10 pb-8 font-['Noto_Sans_CJK_SC',sans-serif] text-[53px] leading-20 font-medium">
            <strong className="font-bold">Edit Page</strong> » Non semper, inquam;
          </h1>
          <div className="mt-[30px] flex items-start gap-[60px]">
            <EditorColumn />
            <SideColumn />
          </div>
        </main>
      </div>
      <SiteFooter />
    </div>
  );
}
